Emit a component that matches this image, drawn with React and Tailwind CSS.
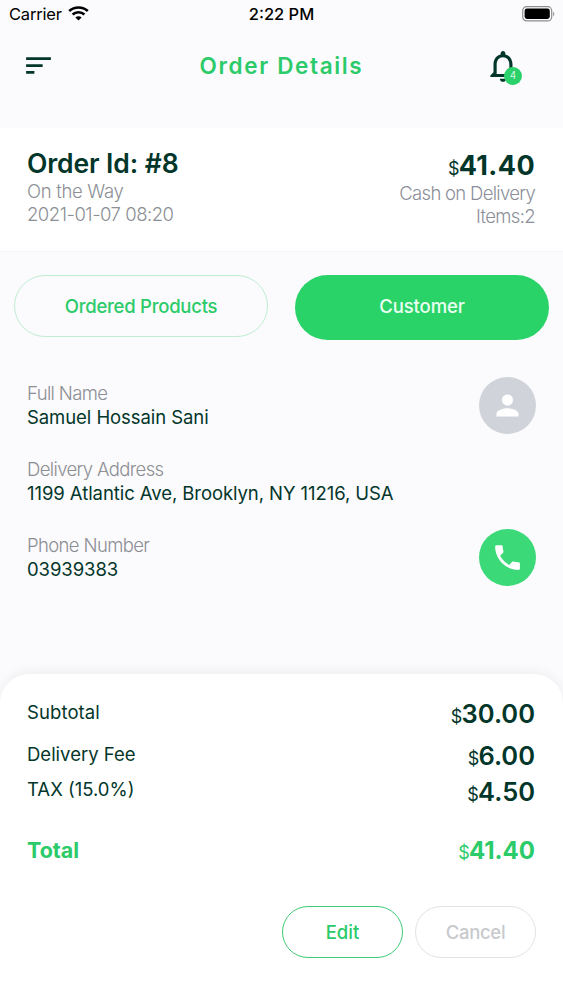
import { MdSort, MdNotificationsNone, MdPerson, MdPhone } from "react-icons/md";

function StatusBar() {
  return (
    <div className="flex h-[29px] items-center text-[16.5px] leading-[29px] text-black">
      <div className="flex flex-1 items-center pl-[9px]">
        <span className="tracking-[-0.2px]">Carrier</span>
        <svg className="ml-[6px] -mt-[2px]" width="21" height="15" viewBox="0 0 21 15" fill="none" stroke="#000">
          <path d="M1.2 5.1C6.4 0.3 14.6 0.3 19.8 5.1" strokeWidth="2.7" />
          <path d="M4.6 8.5C7.9 5.4 13.1 5.4 16.4 8.5" strokeWidth="2.6" />
          <path d="M10.5 14.6L7.4 11.4C9.2 9.9 11.8 9.9 13.6 11.4Z" fill="#000" stroke="none" />
        </svg>
      </div>
      <div className="pr-[2px] font-medium">2:22 PM</div>
      <div className="flex flex-1 justify-end pr-[7px]">
        <svg className="-mt-px" width="34" height="16" viewBox="0 0 34 16">
          <rect x="0.7" y="0.7" width="29" height="14.2" rx="4" fill="none" stroke="#8e8e90" strokeWidth="1.2" />
          <rect x="2.6" y="2.6" width="25.2" height="10.4" rx="2.4" fill="#000" />
          <path d="M31.2 5.4C32.8 6.2 32.8 9.4 31.2 10.2Z" fill="#8e8e90" />
        </svg>
      </div>
    </div>
  );
}

function Field({ label, value }) {
  return (
    <div className="pl-[27px]">
      <div className="h-6 text-[18.5px] font-light leading-6 tracking-[-0.63px] text-[#8c8f94]">{label}</div>
      <div className="h-[25px] text-[18.5px] leading-6 tracking-[-0.07px] text-[#03362a]">{value}</div>
    </div>
  );
}

function Price({ value, className }) {
  return (
    <div className={"flex items-baseline " + className}>
      <span className="text-[18px] font-normal leading-none tracking-[-0.8px]">$</span>
      <span>{value}</span>
    </div>
  );
}

export default function App() {
  return (
    <div className="flex h-[1000px] w-[563px] flex-col overflow-hidden bg-[#fbfafc] font-['Inter','Liberation_Sans',sans-serif]">
      <StatusBar />

      <header className="flex h-[99px] items-start justify-between">
        <div className="flex h-[73px] w-[199px] items-center pl-[22px]">
          <MdSort className="size-[33px] text-[#03362a]" />
        </div>
        <h1 className="whitespace-nowrap text-[22.5px] font-semibold leading-[73px] tracking-[1.65px] text-[#2bcb6a]">Order Details</h1>
        <div className="flex h-[73px] w-[199px] items-center justify-end pr-[41px]">
          <div className="relative size-[38px]">
            <MdNotificationsNone className="size-[38px] text-[#03362a]" />
            <span className="absolute left-[20px] top-[20px] flex size-[18px] items-center justify-center rounded-full bg-[#2bd16b] pb-[2px] text-[10px] font-light leading-none text-white">4</span>
          </div>
        </div>
      </header>

      <section className="flex h-[124px] justify-between border-b border-[#f5f4f6] bg-white pl-[27px] pr-[28px]">
        <div className="pt-[22px]">
          <div className="text-[26.5px] font-semibold leading-[27px] tracking-[-0.1px] text-[#03362a]">Order Id: #8</div>
          <div className="mt-[2px] text-[18.5px] font-light leading-6 tracking-[-0.3px] text-[#8c8f94]">On the Way</div>
          <div className="text-[18.5px] font-light leading-[23px] tracking-[-0.48px] text-[#8c8f94]">2021-01-07 08:20</div>
        </div>
        <div className="flex flex-col items-end pt-6">
          <Price value="41.40" className="h-[27px] text-[27px] font-bold leading-[27px] tracking-[0.4px] text-[#03362a]" />
          <div className="mt-[2px] text-[18.5px] font-light leading-6 tracking-[-0.7px] text-[#8c8f9a]">Cash on Delivery</div>
          <div className="text-[18.5px] font-light leading-[22px] tracking-[-0.65px] text-[#8c8f9a]">Items:2</div>
        </div>
      </section>

      <div className="flex items-start justify-between px-[14px] pt-[23px] text-[18.5px] font-medium">
        <button className="h-[62px] w-[254px] rounded-full border border-[#bfeed2] leading-[60px] tracking-[-0.25px] text-[#2bcb6a]">Ordered Products</button>
        <button className="h-[65px] w-[254px] rounded-full bg-[#29d368] pb-[3px] leading-[62px] tracking-[-0.1px] text-[#e9fff1]">Customer</button>
      </div>

      <section className="flex flex-1 flex-col gap-[27px] pt-[41px]">
        <div className="flex h-[49px] items-center justify-between pr-[27px]">
          <Field label="Full Name" value="Samuel Hossain Sani" />
          <div className="-mt-px flex size-[57px] items-center justify-center rounded-full bg-[#d0d4da]">
            <MdPerson className="size-[33px] text-white" />
          </div>
        </div>
        <Field label="Delivery Address" value="1199 Atlantic Ave, Brooklyn, NY 11216, USA" />
        <div className="flex h-[49px] items-center justify-between pr-[27px]">
          <Field label="Phone Number" value="03939383" />
          <div className="-mt-px flex size-[57px] items-center justify-center rounded-full bg-[#3cd978]">
            <MdPhone className="size-[33px] text-white" />
          </div>
        </div>
      </section>

      <section className="h-[326px] rounded-t-[29px] bg-white pl-[27px] pr-[28px] pt-[22px] text-[18.5px] text-[#03362a] shadow-[0_-2px_12px_rgba(0,0,0,0.06)]">
        <div className="flex h-[36px] items-start justify-between">
          <span className="leading-8 tracking-[0.1px]">Subtotal</span>
          <Price value="30.00" className="text-[25.5px] font-semibold leading-9" />
        </div>
        <div className="mt-[6px] flex h-[36px] items-start justify-between">
          <span className="leading-[33px]">Delivery Fee</span>
          <Price value="6.00" className="text-[25.5px] font-semibold leading-9" />
        </div>
        <div className="flex h-[35px] items-start justify-between">
          <span className="leading-[31px]">TAX (15.0%)</span>
          <Price value="4.50" className="text-[25.5px] font-semibold leading-[35px]" />
        </div>
        <div className="mt-[23px] flex h-[36px] items-start justify-between text-[#2bcb6a]">
          <span className="text-[21.5px] font-bold leading-9">Total</span>
          <Price value="41.40" className="text-[24px] font-bold leading-[37px]" />
        </div>
        <div className="-mr-px mt-[38px] flex justify-end gap-3 font-medium">
          <button className="h-[52px] w-[121px] rounded-full border-[1.5px] border-[#3fcb78] leading-[49px] text-[#2bcb6a]">Edit</button>
          <button className="h-[52px] w-[121px] rounded-full border border-[#e2e3e5] leading-[49px] tracking-[-0.3px] text-[#c8cacd]">Cancel</button>
        </div>
      </section>
    </div>
  );
}
